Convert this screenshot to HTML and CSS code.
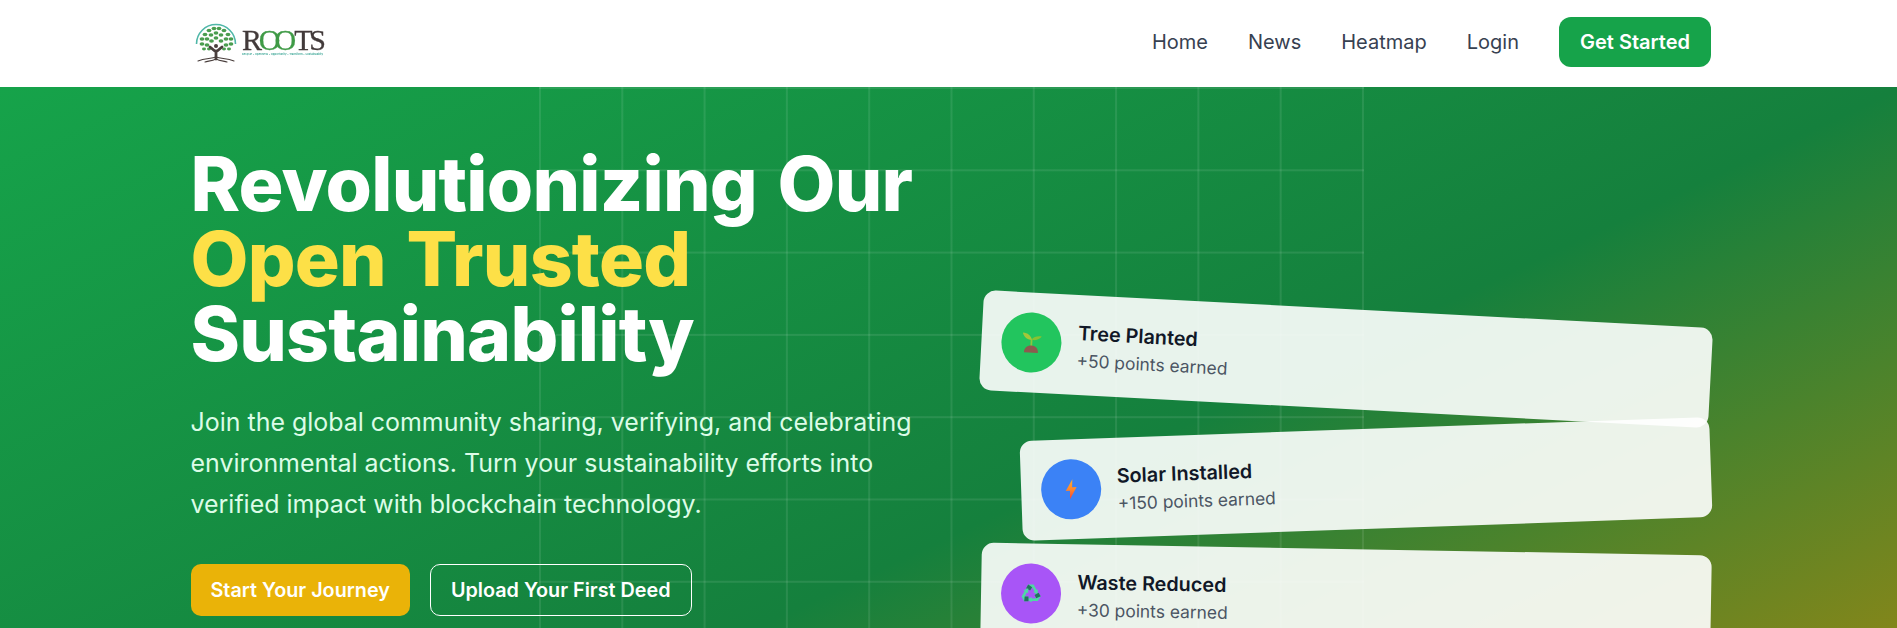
FILE: index.html
```html
<!DOCTYPE html>
<html lang="en">
<head>
    <meta charset="UTF-8">
    <meta name="viewport" content="width=device-width, initial-scale=1.0">
    <title>ROOTS</title>
    <link rel="stylesheet" href="styles.css">
</head>
<body>
<div class="page">
    <nav class="navbar">
        <div class="nav-inner">
            <a class="logo" href="#">
                <svg class="logo-tree" width="42" height="42" viewBox="0 0 42 42">
                    <path d="M1.5 23 A19.5 19.5 0 0 1 40.5 23" fill="none" stroke="#4fb7a8" stroke-width="1.6"/>
                    <g fill="#4a9d4f">
                        <ellipse cx="7" cy="23" rx="2.4" ry="1.7"/><ellipse cx="7" cy="18" rx="2.4" ry="1.7"/>
                        <ellipse cx="10" cy="13.5" rx="2.4" ry="1.7"/><ellipse cx="14" cy="9.5" rx="2.4" ry="1.7"/>
                        <ellipse cx="19" cy="7.5" rx="2.4" ry="1.7"/><ellipse cx="24" cy="7.5" rx="2.4" ry="1.7"/>
                        <ellipse cx="29" cy="9.5" rx="2.4" ry="1.7"/><ellipse cx="33" cy="13.5" rx="2.4" ry="1.7"/>
                        <ellipse cx="36" cy="18" rx="2.4" ry="1.7"/><ellipse cx="36" cy="23" rx="2.4" ry="1.7"/>
                        <ellipse cx="12" cy="18" rx="2.4" ry="1.7"/><ellipse cx="16" cy="14" rx="2.4" ry="1.7"/>
                        <ellipse cx="21" cy="12" rx="2.4" ry="1.7"/><ellipse cx="26" cy="14" rx="2.4" ry="1.7"/>
                        <ellipse cx="31" cy="18" rx="2.4" ry="1.7"/><ellipse cx="12" cy="24" rx="2.4" ry="1.7"/>
                        <ellipse cx="16.5" cy="20" rx="2.4" ry="1.7"/><ellipse cx="21" cy="17" rx="2.4" ry="1.7"/>
                        <ellipse cx="26" cy="20" rx="2.4" ry="1.7"/><ellipse cx="31" cy="24" rx="2.4" ry="1.7"/>
                        <ellipse cx="9" cy="28" rx="2" ry="1.4"/><ellipse cx="34" cy="28" rx="2" ry="1.4"/>
                        <ellipse cx="14" cy="28" rx="2" ry="1.4"/><ellipse cx="29" cy="28" rx="2" ry="1.4"/>
                    </g>
                    <g fill="none" stroke="#4a3f3d" stroke-linecap="round">
                        <path d="M21 38 V30 M21 31 L15 26 M21 31 L27 26" stroke-width="2.8"/>
                        <path d="M21 36 C16 38 10 37 3 40 M21 36 C26 38 32 37 39 40 M21 38 C17 40 13 40 10 41 M21 38 C25 40 29 40 32 41" stroke-width="1.1"/>
                    </g>
                    <circle cx="21" cy="25" r="2" fill="#4a3f3d"/>
                </svg>
                <div class="logo-text">
                    <div class="logo-word">R<span class="logo-o">OO</span>TS</div>
                    <div class="logo-tag">Recycle • Openness • Opportunity • Transform • Sustainability</div>
                </div>
            </a>
            <div class="nav-links">
                <a href="#">Home</a>
                <a href="#">News</a>
                <a href="#">Heatmap</a>
                <a href="#">Login</a>
                <a class="btn-started" href="#">Get Started</a>
            </div>
        </div>
    </nav>

    <section class="hero">
        <div class="hero-grid"></div>
        <div class="hero-inner">
            <div class="hero-left">
                <h1>Revolutionizing Our <span class="highlight">Open Trusted</span> Sustainability</h1>
                <p class="hero-text">Join the global community sharing, verifying, and celebrating environmental actions. Turn your sustainability efforts into verified impact with blockchain technology.</p>
                <div class="hero-buttons">
                    <a class="btn btn-yellow" href="#">Start Your Journey</a>
                    <a class="btn btn-outline" href="#">Upload Your First Deed</a>
                </div>
            </div>
            <div class="hero-right">
                <div class="card card-tree">
                    <div class="card-icon bg-green">
                        <svg width="24" height="24" viewBox="0 0 24 24">
                            <path d="M12 9 V17" stroke="#8cc63f" stroke-width="1.8" fill="none"/>
                            <path d="M12.5 9.5 C11 5 8 2.5 3 2.5 C3.5 6 7 9.5 12.5 9.5 Z" fill="#a4c639"/>
                            <path d="M12 9 C14 6 18 5 22 5.5 C20 8.5 16 10.5 12 9 Z" fill="#86c232"/>
                            <path d="M5 22 C5 17.5 8 15 12 15 C16 15 19 17.5 19 22 Z" fill="#8d5a4e"/>
                        </svg>
                    </div>
                    <div class="card-text">
                        <div class="card-title">Tree Planted</div>
                        <div class="card-sub">+50 points earned</div>
                    </div>
                </div>
                <div class="card card-solar">
                    <div class="card-icon bg-blue">
                        <svg width="24" height="24" viewBox="0 0 24 24">
                            <defs>
                                <linearGradient id="boltFill" x1="0" y1="0" x2="0" y2="1">
                                    <stop offset="0" stop-color="#ffb02e"/>
                                    <stop offset="0.55" stop-color="#ff822d"/>
                                    <stop offset="1" stop-color="#f8413a"/>
                                </linearGradient>
                            </defs>
                            <path d="M13.5 2 L6.5 13.5 H10.8 L10.5 22 L17.5 10 H13 Z" fill="url(#boltFill)"/>
                        </svg>
                    </div>
                    <div class="card-text">
                        <div class="card-title">Solar Installed</div>
                        <div class="card-sub">+150 points earned</div>
                    </div>
                </div>
                <div class="card card-waste">
                    <div class="card-icon bg-purple">
                        <svg width="24" height="24" viewBox="0 0 24 24">
                            <g id="recycleArrow">
                                <path d="M9 3 H14.5 L17.6 8.4 L18.9 7.6 L18.5 12.8 L14.1 10.4 L15.4 9.6 L13 5.8 L11 9 L7 6.8 Z" fill="#4fd8a5"/>
                                <path d="M9 3 L13 5.8 L11 9 L7 6.8 Z" fill="#24705e"/>
                            </g>
                            <use href="#recycleArrow" transform="rotate(120 12 12.5)"/>
                            <use href="#recycleArrow" transform="rotate(240 12 12.5)"/>
                        </svg>
                    </div>
                    <div class="card-text">
                        <div class="card-title">Waste Reduced</div>
                        <div class="card-sub">+30 points earned</div>
                    </div>
                </div>
            </div>
        </div>
    </section>
</div>
</body>
</html>
```
FILE: styles.css
```css
html, body {
    margin: 0;
    padding: 0;
    height: 100%;
    overflow: hidden;
}
body {
    font-family: Inter, "Liberation Sans", sans-serif;
    background-color: white;
}
a {
    text-decoration: none;
    color: inherit;
}
.page {
    width: 1903px;
    height: 628px;
    overflow: hidden;
}

/* navbar */
.navbar {
    height: 87px;
    background-color: white;
}
.nav-inner {
    width: 1521px;
    height: 100%;
    box-sizing: border-box;
    padding-bottom: 3px;
    margin-left: 190px;
    display: flex;
    justify-content: space-between;
    align-items: center;
}
.logo {
    display: flex;
    align-items: center;
    gap: 5px;
    margin-left: 5px;
    filter: blur(0.25px);
}
.logo-tree {
    display: block;
}
.logo-word {
    font-family: "Liberation Serif", serif;
    font-size: 30px;
    line-height: 24px;
    letter-spacing: -3.2px;
    -webkit-text-stroke: 0.3px;
    color: #423a3a;
}
.logo-o {
    color: #3f9a46;
    letter-spacing: -6px;
    margin-right: 4px;
}
.logo-tag {
    font-size: 2.7px;
    line-height: 5px;
    white-space: nowrap;
    color: #2fa08f;
    font-weight: 600;
}
.nav-links {
    display: flex;
    align-items: center;
    gap: 40px;
    font-size: 20px;
    color: #374151;
}
.btn-started {
    padding: 0 21px;
    height: 50px;
    display: flex;
    align-items: center;
    background-color: #16a34a;
    color: white;
    font-weight: 600;
    border-radius: 12px;
}

/* hero */
.hero {
    position: relative;
    height: 897px;
    background-image: linear-gradient(to bottom right, #16a34a, #15803d 50%, #ca8a04);
}
.hero-grid {
    position: absolute;
    top: 0;
    bottom: 0;
    left: 539px;
    width: 825px;
    background-image:
        linear-gradient(rgba(255, 255, 255, 0.09) 2px, transparent 2px),
        linear-gradient(90deg, rgba(255, 255, 255, 0.09) 2px, transparent 2px);
    background-size: 82.3px 82.3px;
}
.hero-inner {
    position: relative;
    width: 1521px;
    margin-left: 190px;
    display: grid;
    grid-template-columns: 1fr 1fr;
    gap: 64px;
}
.hero-left {
    padding-top: 59px;
    padding-left: 0.5px;
}
h1 {
    margin: 0 0 31px;
    font-size: 75px;
    line-height: 75px;
    font-weight: 800;
    letter-spacing: -0.8px;
    word-spacing: 5px;
    color: white;
}
.highlight {
    display: block;
    color: #fde047;
}
.hero-text {
    margin: 0 0 40px;
    font-size: 24.95px;
    line-height: 40.8px;
    color: #dcfce7;
}
.hero-buttons {
    display: flex;
    gap: 20px;
}
.btn {
    height: 52px;
    box-sizing: border-box;
    display: flex;
    align-items: center;
    font-size: 19.8px;
    font-weight: 600;
    color: white;
    border-radius: 10px;
}
.btn-yellow {
    padding: 0 20px;
    background-color: #eab308;
}
.btn-outline {
    padding: 0 20px;
    border: 1px solid white;
}
.hero-right {
    padding-top: 222px;
    margin: 0 1px 0 -2px;
    display: flex;
    flex-direction: column;
    gap: 20px;
}
.card {
    display: flex;
    align-items: center;
    gap: 16px;
    padding: 20px;
    background-color: rgba(255, 255, 255, 0.9);
    border-radius: 12px;
}
.card-tree {
    transform: rotate(3deg);
}
.card-solar {
    margin-left: 40px;
    transform: rotate(-2deg);
}
.card-waste {
    transform: rotate(1deg);
}
.card-icon {
    width: 60px;
    height: 60px;
    border-radius: 50%;
    display: flex;
    align-items: center;
    justify-content: center;
}
.bg-green {
    background-color: #22c55e;
}
.bg-blue {
    background-color: #3b82f6;
}
.bg-purple {
    background-color: #a855f7;
}
.card-text {
    padding-top: 2px;
}
.card-title {
    font-size: 19.8px;
    line-height: 28px;
    font-weight: 600;
    color: #111827;
}
.card-sub {
    margin-top: 2px;
    font-size: 17.4px;
    line-height: 24px;
    color: #4b5563;
}
```
